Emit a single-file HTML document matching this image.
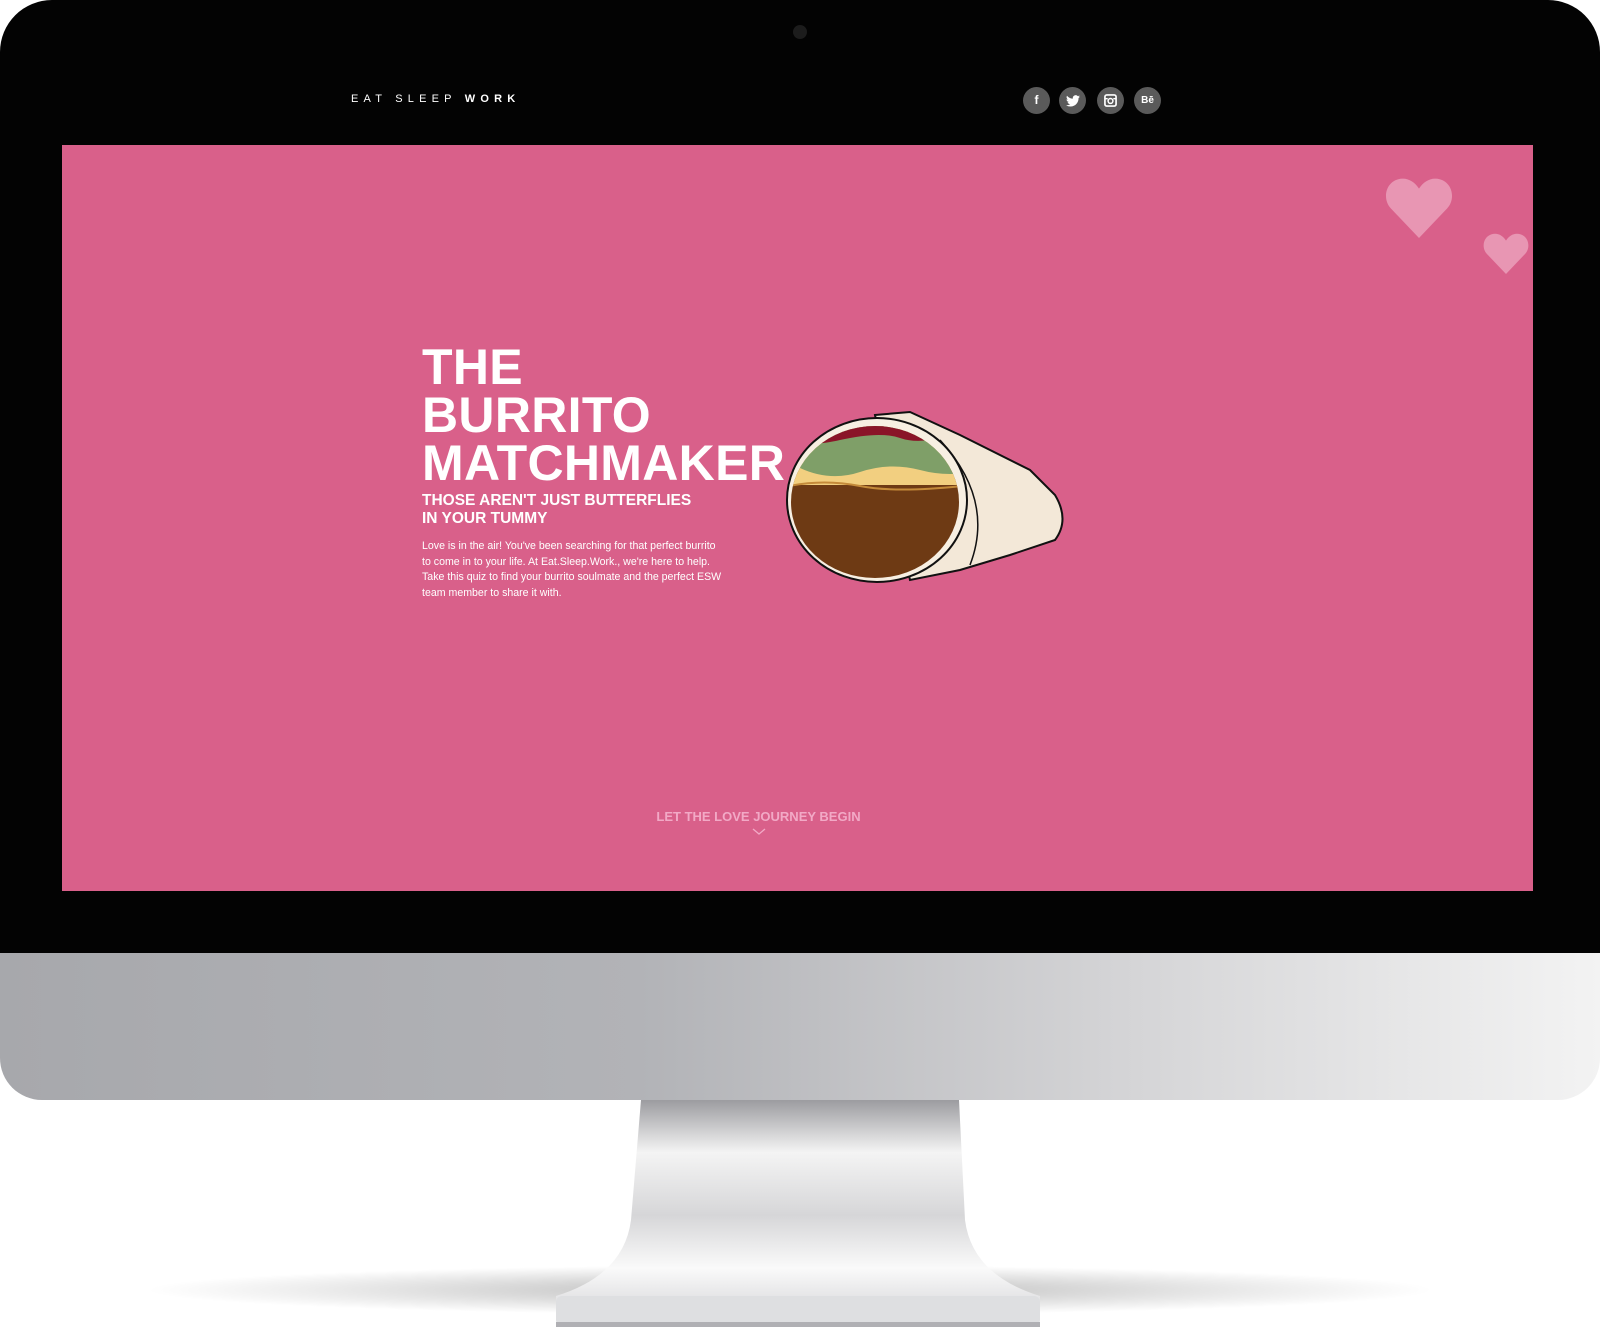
<!DOCTYPE html>
<html><head><meta charset="utf-8"><style>
html,body{margin:0;padding:0;background:#fff;}
body{width:1600px;height:1344px;position:relative;overflow:hidden;font-family:"Liberation Sans",sans-serif;}
.abs{position:absolute;}
#mon{left:0;top:0;width:1600px;height:953px;background:#030303;border-radius:52px 52px 0 0;}
#chin{left:0;top:953px;width:1600px;height:147px;background:linear-gradient(90deg,#a7a8ac 0%,#b2b3b7 40%,#d4d4d6 70%,#f3f3f3 100%);border-radius:0 0 42px 42px;}
#pink{left:62px;top:145px;width:1471px;height:746px;background:#d9608a;}
.logo{left:351px;top:93px;color:#fff;font-size:11px;letter-spacing:5.2px;}
.ic{width:27px;height:27px;border-radius:50%;background:#5a5a5a;color:#fff;font-size:12px;font-weight:bold;text-align:center;line-height:27px;top:87px;}
h1{position:absolute;left:422px;top:343px;margin:0;color:#fff;font-size:50px;line-height:48px;font-weight:bold;letter-spacing:0.3px;}
.sub{left:422px;top:492px;color:#fff;font-size:15.5px;line-height:18px;font-weight:bold;}
.par{left:422px;top:539px;color:#fff;font-size:10.6px;line-height:15.6px;width:305px;}
.cta{left:600px;top:809px;width:317px;text-align:center;color:#f2a9c6;font-size:13px;font-weight:bold;}
</style></head><body>
<div id="mon" class="abs"></div>
<div class="abs" style="left:793px;top:25px;width:14px;height:14px;border-radius:50%;background:#1c1c1c;"></div>
<div id="pink" class="abs"></div>
<div class="abs logo">EAT SLEEP <b>WORK</b></div>
<div class="abs ic" style="left:1023px">f</div>
<div class="abs ic" style="left:1059px"><svg width="14" height="12" viewBox="0 0 24 20" style="margin-top:8px"><path fill="#fff" d="M24 2.4a10 10 0 0 1-2.8.8A5 5 0 0 0 23.3.5a10 10 0 0 1-3.1 1.2A4.9 4.9 0 0 0 11.8 6 14 14 0 0 1 1.7.9a4.9 4.9 0 0 0 1.5 6.6A4.9 4.9 0 0 1 1 6.9a4.9 4.9 0 0 0 3.9 4.9 5 5 0 0 1-2.2.1 4.9 4.9 0 0 0 4.6 3.4A9.9 9.9 0 0 1 0 17.3 14 14 0 0 0 7.5 19.5c9.1 0 14-7.5 14-14v-.6A10 10 0 0 0 24 2.4z"/></svg></div>
<div class="abs ic" style="left:1097px"><svg width="13" height="13" viewBox="0 0 14 14" style="margin-top:7px"><rect x="1" y="1" width="12" height="12" rx="2" fill="none" stroke="#fff" stroke-width="1.8"/><circle cx="7" cy="7.5" r="2.6" fill="none" stroke="#fff" stroke-width="1.6"/><path d="M1 5h3M10 5h3" stroke="#fff" stroke-width="1.5"/></svg></div>
<div class="abs ic" style="left:1134px;font-size:10px">Bē</div>
<svg class="abs" style="left:1385px;top:176px" width="68" height="62" viewBox="0 0 24 22"><path fill="#e896b3" d="M12 22L2 11.5C-1 8.3 0 2.5 4.5 1.2 7.5.3 10.3 1.8 12 4.5 13.7 1.8 16.5.3 19.5 1.2 24 2.5 25 8.3 22 11.5z"/></svg>
<svg class="abs" style="left:1483px;top:232px" width="46" height="42" viewBox="0 0 24 22"><path fill="#e896b3" d="M12 22L2 11.5C-1 8.3 0 2.5 4.5 1.2 7.5.3 10.3 1.8 12 4.5 13.7 1.8 16.5.3 19.5 1.2 24 2.5 25 8.3 22 11.5z"/></svg>
<h1>THE<br>BURRITO<br>MATCHMAKER</h1>
<div class="abs sub">THOSE AREN'T JUST BUTTERFLIES<br>IN YOUR TUMMY</div>
<div class="abs par">Love is in the air! You've been searching for that perfect burrito to come in to your life. At Eat.Sleep.Work., we're here to help. Take this quiz to find your burrito soulmate and the perfect ESW team member to share it with.</div>
<svg class="abs" style="left:780px;top:400px" width="300" height="200" viewBox="0 0 300 200">
<path d="M95 15 L130 12 L180 35 L250 70 L275 95 Q290 120 275 140 L230 155 L180 170 L130 180 Z" fill="#f3e8d8" stroke="#111" stroke-width="2"/>
<path d="M160 40 Q215 100 190 165" fill="none" stroke="#111" stroke-width="1.5"/>
<ellipse cx="97" cy="100" rx="90" ry="82" fill="#f7efe2" stroke="#111" stroke-width="2"/>
<clipPath id="c"><ellipse cx="95" cy="102" rx="84" ry="76"/></clipPath>
<g clip-path="url(#c)">
<rect x="0" y="0" width="200" height="200" fill="#6e3a14"/>
<rect x="0" y="0" width="200" height="85" fill="#f2cf80"/>
<path d="M0 0H200V70Q170 78 140 70T80 72T20 68T0 70Z" fill="#7f9f68"/>
<path d="M30 20H170V35Q140 45 120 38T60 40T30 35Z" fill="#8a1428"/>
<path d="M0 88Q40 78 80 86T200 84" fill="none" stroke="#c48a3a" stroke-width="2"/>
</g>
</svg>
<div class="abs cta">LET THE LOVE JOURNEY BEGIN</div>
<svg class="abs" style="left:752px;top:828px" width="14" height="8" viewBox="0 0 14 8"><path d="M1 1l6 5 6-5" fill="none" stroke="#f2a9c6" stroke-width="1.3"/></svg>
<div id="chin" class="abs"></div>
<div class="abs" style="left:140px;top:1265px;width:1300px;height:50px;border-radius:50%;background:radial-gradient(ellipse at center,rgba(0,0,0,.28),rgba(0,0,0,0) 70%);"></div>
<svg class="abs" style="left:540px;top:1100px" width="520" height="235" viewBox="0 0 520 235">
<defs><linearGradient id="st" x1="0" y1="0" x2="0" y2="1"><stop offset="0" stop-color="#9c9ca0"/><stop offset=".25" stop-color="#f4f4f4"/><stop offset=".55" stop-color="#d6d6d8"/><stop offset=".8" stop-color="#fafafa"/><stop offset="1" stop-color="#dcdcde"/></linearGradient></defs>
<path d="M101 0H419L425 120Q432 175 500 196V210H16V196Q84 175 91 120Z" fill="url(#st)"/>
<rect x="16" y="196" width="484" height="30" rx="6" fill="#dedfe1"/>
<rect x="16" y="222" width="484" height="5" fill="#b0b0b4"/>
</svg>
</body></html>
